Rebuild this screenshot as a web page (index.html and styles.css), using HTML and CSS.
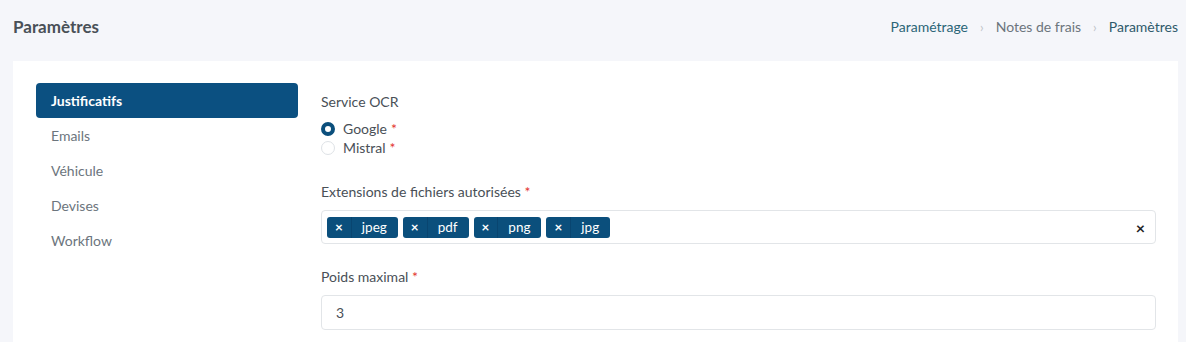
FILE: index.html
```html
<!DOCTYPE html>
<html lang="fr">
<head>
<meta charset="utf-8">
<link rel="stylesheet" href="styles.css">
</head>
<body>
<div class="page">
  <header class="topbar">
    <h1 class="title">Paramètres</h1>
    <nav class="crumbs">
      <a class="crumb link">Paramétrage</a>
      <span class="sep">›</span>
      <span class="crumb">Notes de frais</span>
      <span class="sep">›</span>
      <span class="crumb current">Paramètres</span>
    </nav>
  </header>
  <section class="card">
    <ul class="side">
      <li class="item active">Justificatifs</li>
      <li class="item">Emails</li>
      <li class="item">Véhicule</li>
      <li class="item">Devises</li>
      <li class="item">Workflow</li>
    </ul>
    <div class="form">
      <div class="group">
        <div class="label">Service OCR</div>
        <label class="radio"><span class="dot on"></span>Google <span class="req">*</span></label>
        <label class="radio"><span class="dot"></span>Mistral <span class="req">*</span></label>
      </div>
      <div class="group g2">
        <div class="label">Extensions de fichiers autorisées <span class="req">*</span></div>
        <div class="input tags">
          <span class="tag"><span class="x">×</span><span class="t">jpeg</span></span>
          <span class="tag"><span class="x">×</span><span class="t">pdf</span></span>
          <span class="tag"><span class="x">×</span><span class="t">png</span></span>
          <span class="tag"><span class="x">×</span><span class="t">jpg</span></span>
          <span class="clear">×</span>
        </div>
      </div>
      <div class="group g3">
        <div class="label">Poids maximal <span class="req">*</span></div>
        <div class="input">3</div>
      </div>
    </div>
  </section>
</div>
</body>
</html>
```
FILE: styles.css
```css
* { box-sizing: border-box; }
html, body { margin: 0; padding: 0; }
body {
  background: #f5f6fa;
  font-family: "Lato", "Noto Sans", sans-serif;
  font-size: 14px;
  color: #495057;
  width: 1186px;
  height: 342px;
  overflow: hidden;
}
.page { padding: 0 8px 0 13px; }
.topbar {
  height: 61px;
  display: flex;
  align-items: center;
  justify-content: space-between;
  padding-bottom: 8px;
}
.title {
  margin: 0;
  font-size: 17px;
  font-weight: 700;
  color: #495057;
}
.crumbs {
  display: flex;
  align-items: center;
  gap: 10px;
  font-size: 14px;
}
.crumb { color: #6c757d; }
.crumb.link { color: #2b6577; }
.crumb.current { color: #2f5a6b; }
.sep { color: #c0c4c8; font-size: 13px; padding: 0 2px; }
.card {
  background: #fff;
  display: flex;
  padding: 22px 22px 0 23px;
  height: 281px;
}
.side {
  list-style: none;
  margin: 0;
  padding: 0;
  width: 262px;
  flex: none;
}
.item {
  height: 35px;
  line-height: 35px;
  padding-left: 15px;
  border-radius: 4px;
  color: #6c757d;
  font-size: 14px;
}
.item.active {
  background: #0b5081;
  color: #fff;
  font-weight: 700;
}
.form {
  flex: 1;
  padding-left: 23px;
  padding-top: 10px;
}
.label { font-size: 14px; color: #495057; line-height: 17px; }
.req { color: #e3342f; }
.radio {
  display: flex;
  align-items: center;
  gap: 8px;
  line-height: 19px;
  color: #495057;
}
.group .label + .radio { margin-top: 9px; }
.radio .req { margin-left: -4px; }
.dot {
  width: 14px;
  height: 14px;
  border-radius: 50%;
  border: 1px solid #dee2e6;
  background: #fff;
}
.dot.on { border: 4px solid #0b4f7c; }
.g2 { margin-top: 26px; }
.g3 { margin-top: 24px; }
.input {
  margin-top: 10px;
  height: 35px;
  border: 1px solid #e2e5e8;
  border-radius: 4px;
  display: flex;
  align-items: center;
  padding: 0 14px;
  color: #495057;
}
.tags { padding: 0 10px 0 5px; gap: 5px; margin-top: 10px; height: 34px; }
.tag {
  background: #0b4f7c;
  color: #fff;
  border-radius: 3px;
  height: 21px;
  display: flex;
  align-items: center;
  font-size: 13.5px;
}
.tag .x {
  padding: 0 8px;
  font-weight: 700;
  border-right: 1px solid #094570;
  height: 100%;
  display: flex;
  align-items: center;
}
.tag .t { padding: 0 11px 0 10px; }
.clear { margin-left: auto; font-weight: 700; font-size: 16px; color: #222; }
```
